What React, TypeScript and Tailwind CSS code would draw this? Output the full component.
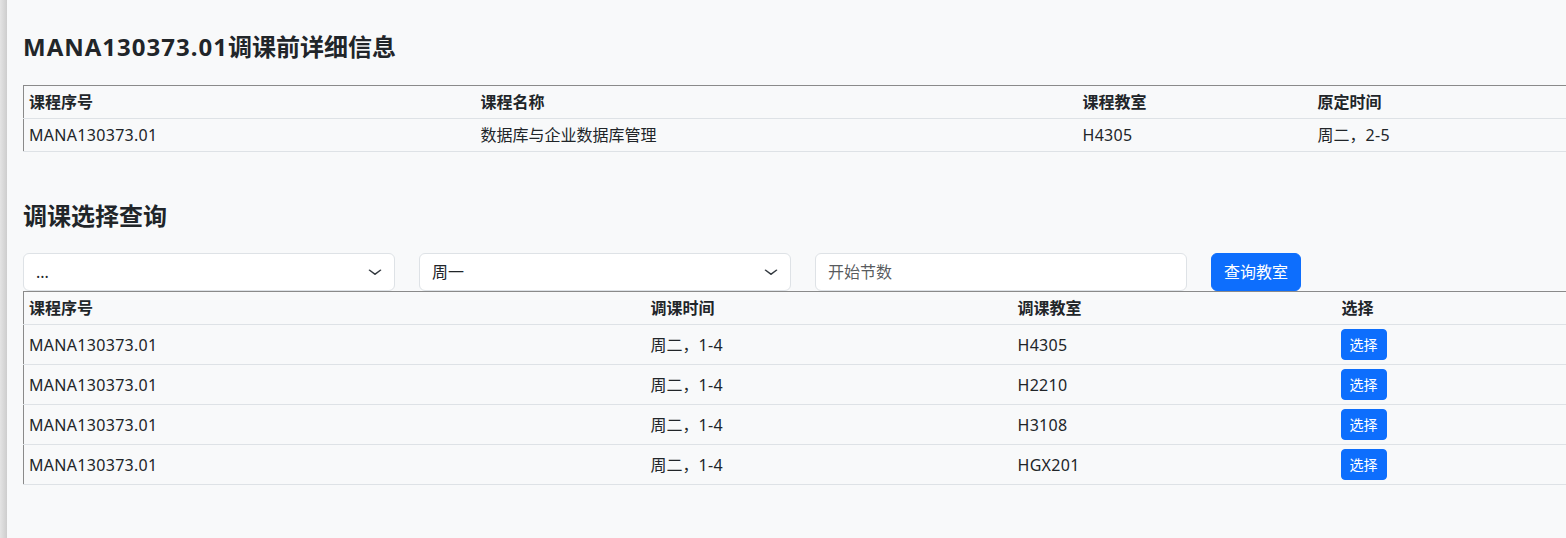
import React from "react";

const font = {
  fontFamily: '"Noto Sans", "Noto Sans CJK SC", sans-serif',
};

function Chevron() {
  return (
    <svg
      className="pointer-events-none absolute right-[12px] top-1/2 -translate-y-1/2"
      width="16"
      height="12"
      viewBox="0 0 16 16"
      fill="none"
      preserveAspectRatio="none"
    >
      <path
        d="m2.5 5.5 5.5 5.5 5.5-5.5"
        stroke="#343a40"
        strokeWidth="1.7"
        strokeLinecap="round"
        strokeLinejoin="round"
      />
    </svg>
  );
}

function Select({ value }: { value: string }) {
  return (
    <div className="relative w-[372px] shrink-0">
      <select
        defaultValue={value}
        className="h-[38px] w-full appearance-none rounded-[6px] border border-[#dee2e6] bg-white pl-[12px] pr-[40px] text-[16px] leading-[24px] text-[#212529] outline-none"
        style={font}
      >
        <option value={value}>{value}</option>
      </select>
      <Chevron />
    </div>
  );
}

const rows2 = [
  { id: "MANA130373.01", time: "周二，1-4", room: "H4305" },
  { id: "MANA130373.01", time: "周二，1-4", room: "H2210" },
  { id: "MANA130373.01", time: "周二，1-4", room: "H3108" },
  { id: "MANA130373.01", time: "周二，1-4", room: "HGX201" },
];

const L = ({ children }: { children: React.ReactNode }) => (
  <span className="tracking-[0.3px]">{children}</span>
);

export default function App() {
  return (
    <div
      className="flex h-[538px] w-full overflow-hidden bg-[#f8f9fa] text-[#212529]"
      style={font}
    >
      <div className="h-full w-[7px] shrink-0 bg-[linear-gradient(to_right,#e4e4e4,#cdcdcd)]" />
      <div className="min-w-0 flex-1 pl-[16px]">
        <h1 className="mt-[32px] text-[24px] font-bold leading-[29px] text-[#212529]">
          <span className="tracking-[1px]">MANA130373.01</span>调课前详细信息
        </h1>
        <table className="mt-[24px] w-[1620px] table-fixed border-collapse border-l border-t border-[#8a8a8a] text-left text-[16px] leading-[24px]">
          <colgroup>
            <col className="w-[452px]" />
            <col className="w-[602px]" />
            <col className="w-[235px]" />
            <col />
          </colgroup>
          <thead>
            <tr className="border-b border-[#dee2e6]">
              <th className="px-[5px] py-[4px] font-bold">课程序号</th>
              <th className="px-[5px] py-[4px] font-bold">课程名称</th>
              <th className="px-[5px] py-[4px] font-bold">课程教室</th>
              <th className="px-[5px] py-[4px] font-bold">原定时间</th>
            </tr>
          </thead>
          <tbody>
            <tr className="border-b border-[#dee2e6]">
              <td className="px-[5px] py-[4px]"><L>MANA130373.01</L></td>
              <td className="px-[5px] py-[4px]">数据库与企业数据库管理</td>
              <td className="px-[5px] py-[4px]"><L>H4305</L></td>
              <td className="px-[5px] py-[4px]">周二，<L>2-5</L></td>
            </tr>
          </tbody>
        </table>

        <h2 className="mt-[49px] text-[24px] font-bold leading-[29px] text-[#212529]">
          调课选择查询
        </h2>

        <div className="mt-[23px] flex gap-[24px]">
          <Select value="..." />
          <Select value="周一" />
          <input
            placeholder="开始节数"
            className="h-[38px] w-[372px] shrink-0 rounded-[6px] border border-[#dee2e6] bg-white px-[12px] text-[16px] leading-[24px] text-[#212529] outline-none placeholder:text-[#212529bf]"
            style={font}
          />
          <button
            className="h-[38px] w-[90px] shrink-0 rounded-[6px] border border-[#0d6efd] bg-[#0d6efd] text-[16px] leading-[24px] text-white"
            style={font}
          >
            查询教室
          </button>
        </div>

        <table className="w-[1620px] table-fixed border-collapse border-l border-t border-[#8a8a8a] text-left text-[16px] leading-[24px]">
          <colgroup>
            <col className="w-[622px]" />
            <col className="w-[367px]" />
            <col className="w-[324px]" />
            <col />
          </colgroup>
          <thead>
            <tr className="border-b border-[#dee2e6]">
              <th className="px-[5px] py-[4px] font-bold">课程序号</th>
              <th className="px-[5px] py-[4px] font-bold">调课时间</th>
              <th className="px-[5px] py-[4px] font-bold">调课教室</th>
              <th className="px-[5px] py-[4px] font-bold">选择</th>
            </tr>
          </thead>
          <tbody>
            {rows2.map((r, i) => (
              <tr key={i} className="border-b border-[#dee2e6]">
                <td className="px-[5px] py-[4px] align-middle"><L>{r.id}</L></td>
                <td className="px-[5px] py-[4px] align-middle">周二，<L>1-4</L></td>
                <td className="px-[5px] py-[4px] align-middle"><L>{r.room}</L></td>
                <td className="px-[4px] py-[4px] align-middle">
                  <button
                    className="h-[31px] w-[46px] rounded-[4px] border border-[#0d6efd] bg-[#0d6efd] text-[14px] leading-[21px] text-white"
                    style={font}
                  >
                    选择
                  </button>
                </td>
              </tr>
            ))}
          </tbody>
        </table>
      </div>
    </div>
  );
}
